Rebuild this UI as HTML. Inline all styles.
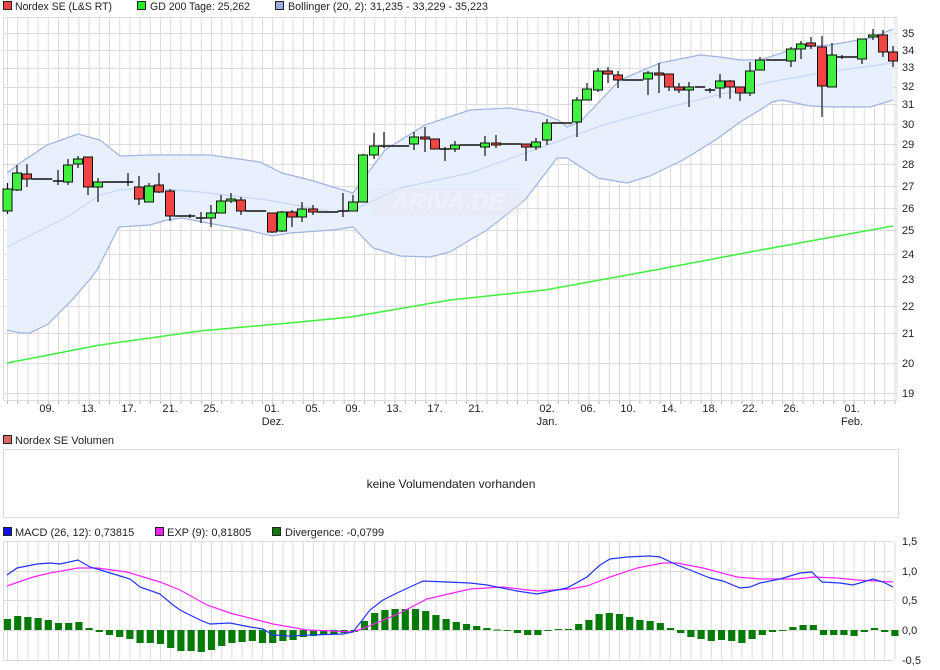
<!DOCTYPE html>
<html><head><meta charset="utf-8">
<style>
body{margin:0;background:#fff;}
svg{display:block;font-family:"Liberation Sans",Arial,sans-serif;}
</style></head>
<body>
<svg id="s" width="940" height="670" viewBox="0 0 940 670" xmlns="http://www.w3.org/2000/svg">
<rect width="940" height="670" fill="#fff"/>
<g id="grid"></g>
<g id="boll"></g>
<g id="wm" opacity="0.35">
<rect x="372" y="188" width="150" height="28" rx="6" fill="#e6e9ef"/>
<text x="448" y="210" font-size="24" font-style="italic" font-weight="bold" fill="#f7f8fa" text-anchor="middle">ARIVA.DE</text>
</g>
<polyline fill="none" stroke="#3ef03e" stroke-width="1.5" points="7,363 100,345 200,331 300,322 351,317 450,300 545,290 600,280 655,270 750,252 893,226"/>
<g id="candles"></g>
<g id="macd"></g>

<!-- legends -->
<rect x="3.5" y="1.5" width="8" height="8" fill="#ee4444" stroke="#222"/>
<text x="15" y="10" font-size="11" fill="#222" textLength="97" lengthAdjust="spacingAndGlyphs">Nordex SE (L&amp;S RT)</text>
<rect x="137.5" y="1.5" width="8" height="8" fill="#22ee22" stroke="#222"/>
<text x="150" y="10" font-size="11" fill="#222" textLength="100" lengthAdjust="spacingAndGlyphs">GD 200 Tage: 25,262</text>
<rect x="275.5" y="1.5" width="8" height="8" fill="#99aadd" stroke="#222"/>
<text x="288" y="10" font-size="11" fill="#222" textLength="200" lengthAdjust="spacingAndGlyphs">Bollinger (20, 2): 31,235 - 33,229 - 35,223</text>

<g font-size="11" fill="#222">
<text x="902" y="37">35</text><text x="902" y="54">34</text><text x="902" y="71">33</text>
<text x="902" y="90">32</text><text x="902" y="108">31</text><text x="902" y="128">30</text>
<text x="902" y="148">29</text><text x="902" y="168">28</text><text x="902" y="190">27</text>
<text x="902" y="212">26</text><text x="902" y="234">25</text><text x="902" y="258">24</text>
<text x="902" y="283">23</text><text x="902" y="310">22</text><text x="902" y="337">21</text>
<text x="902" y="367">20</text><text x="902" y="397">19</text>
</g>
<g font-size="11" fill="#222" text-anchor="middle">
<text x="47" y="412">09.</text><text x="89" y="412">13.</text><text x="129" y="412">17.</text>
<text x="170" y="412">21.</text><text x="211" y="412">25.</text><text x="272" y="412">01.</text>
<text x="313" y="412">05.</text><text x="353" y="412">09.</text><text x="394" y="412">13.</text>
<text x="435" y="412">17.</text><text x="476" y="412">21.</text><text x="547" y="412">02.</text>
<text x="588" y="412">06.</text><text x="628" y="412">10.</text><text x="669" y="412">14.</text>
<text x="710" y="412">18.</text><text x="750" y="412">22.</text><text x="791" y="412">26.</text>
<text x="852" y="412">01.</text>
<text x="273" y="425">Dez.</text><text x="547" y="425">Jan.</text><text x="852" y="425">Feb.</text>
</g>

<rect x="3.5" y="435.5" width="8" height="8" fill="#dd6666" stroke="#222"/>
<text x="15" y="444" font-size="11" fill="#222">Nordex SE Volumen</text>
<rect x="3.5" y="449.5" width="895" height="68" fill="#fff" stroke="#dcdcdc"/>
<text x="451" y="488" font-size="12" fill="#222" text-anchor="middle">keine Volumendaten vorhanden</text>

<rect x="3.5" y="527.5" width="8" height="8" fill="#1111ee" stroke="#222"/>
<text x="15" y="536" font-size="11" fill="#222">MACD (26, 12): 0,73815</text>
<rect x="155.5" y="527.5" width="8" height="8" fill="#ee22ee" stroke="#222"/>
<text x="167" y="536" font-size="11" fill="#222">EXP (9): 0,81805</text>
<rect x="272.5" y="527.5" width="8" height="8" fill="#117711" stroke="#222"/>
<text x="285" y="536" font-size="11" fill="#222">Divergence: -0,0799</text>
<g font-size="11" fill="#222">
<text x="902" y="545">1,5</text><text x="902" y="575">1,0</text><text x="902" y="604">0,5</text>
<text x="902" y="634">0,0</text><text x="902" y="664">-0,5</text>
</g>
</svg>
<script>
var NS="http://www.w3.org/2000/svg";
function el(p,t,a){var e=document.createElementNS(NS,t);for(var k in a)e.setAttribute(k,a[k]);document.getElementById(p).appendChild(e);return e;}
var S=10.2;
for(var i=0;i<88;i++){var x=7.5+i*S;
 el("grid","line",{x1:x,y1:17,x2:x,y2:400,stroke:"#dcdcdc","stroke-width":1});
 el("grid","line",{x1:x,y1:400,x2:x,y2:404,stroke:"#bbb","stroke-width":1});
 el("grid","line",{x1:x,y1:541,x2:x,y2:660,stroke:"#dcdcdc","stroke-width":1});}
var ys=[17,33,50,68,87,104,124,144,164,186,208,230,254,279,306,333,363,393,400];
ys.forEach(function(y){el("grid","line",{x1:3,y1:y+.5,x2:897,y2:y+.5,stroke:"#dcdcdc","stroke-width":1});});
el("grid","line",{x1:3.5,y1:17,x2:3.5,y2:400,stroke:"#dcdcdc"});
el("grid","line",{x1:897,y1:17,x2:897,y2:400,stroke:"#dcdcdc"});
[541,571,600,630,660].forEach(function(y){el("grid","line",{x1:3,y1:y+.5,x2:893,y2:y+.5,stroke:"#dcdcdc"});});
el("grid","line",{x1:3.5,y1:541,x2:3.5,y2:660,stroke:"#dcdcdc"});
var up=[[7,173],[20,163],[47,145],[78,134],[100,140],[120,156],[150,155],[210,155],[260,162],[282,173],[310,180],[353,193],[370,170],[385,150],[425,125],[470,110],[510,108],[540,113],[558,120],[567,127],[580,122],[620,80],[660,63],[700,55],[720,57],[740,60],[760,60],[800,47],[830,45],[870,38],[883,33],[893,29]];
var lo=[[7,330],[20,333],[30,333],[48,324],[73,299],[91,278],[97,270],[119,227],[150,225],[167,220],[182,218],[213,224],[247,230],[272,236],[290,233],[333,230],[353,227],[373,248],[400,256],[430,257],[450,252],[470,240],[487,230],[525,200],[557,158],[567,158],[598,178],[627,183],[650,176],[683,160],[717,139],[740,122],[760,110],[772,102],[782,100],[810,106],[833,107],[870,107],[893,100]];
var mid=[[7,247],[67,217],[100,195],[119,190],[150,188],[200,192],[267,200],[333,212],[353,210],[400,188],[470,173],[553,143],[603,125],[670,107],[770,82],[820,73],[893,63]];
function pts(a){return a.map(function(p){return p[0]+","+p[1];}).join(" ");}
el("boll","polygon",{points:pts(up)+" "+pts(lo.slice().reverse()),fill:"#e8effd"});
el("boll","polyline",{points:pts(up),fill:"none",stroke:"#9fb2e2","stroke-width":1.2});
el("boll","polyline",{points:pts(lo),fill:"none",stroke:"#9fb2e2","stroke-width":1.2});
el("boll","polyline",{points:pts(mid),fill:"none",stroke:"#c5d6f6","stroke-width":1.2});
var C=[["g",7.5,189,211,183,214],["g",17,173,190,165,191],["r",27,174,179,164,187],["f",37,179],["f",47,179],["f",58,181,170,185],
["g",68,165,182,159,185],["g",78,159,164,156,168],["r",88,157,187,157,195],["g",98,182,187,178,202],["f",108,182],["f",118,182],["f",128,182,173,186],
["r",139,187,199,176,205],["g",149,186,202,183,202],["r",159,185,192,173,193],["r",170,191,216,189,221],["f",180,216],["f",190,216,214,218],["f",201,218,212,223],
["g",211,213,218,205,227],["g",221,201,213,195,213],["g",231,199,201,193,203],["r",241,200,211,197,215],["f",251,211],["f",261,211],
["r",272,213,232,213,233],["g",282,212,231,211,232],["r",292,212,217,210,227],["g",302,209,217,202,222],["r",313,209,212,205,215],["f",323,212],["f",333,212],["f",343,211,193,217],
["g",353,202,211,195,211],["g",363,155,202,154,202],["g",374,146,155,133,159],["f",384,146,132,148],["f",394,146],["f",404,146],
["g",414,137,144,132,150],["r",425,137,139,127,152],["r",435,139,149,139,149],["f",445,149,147,161],["g",455,145,149,141,152],["f",465,145],["f",475,145],
["g",485,143,147,136,156],["r",496,143,145,135,148],["f",506,144],["f",516,144],["r",526,144,147,144,161],["g",536,142,147,138,150],["g",547,123,140,119,145],["f",557,123],["f",567,123],
["g",577,100,122,97,137],["g",587,89,100,83,100],["g",598,71,90,68,92],["r",608,71,74,67,83],["r",618,75,80,71,88],["f",628,80],["f",638,80],
["g",648,73,79,71,95],["r",659,73,75,63,93],["r",669,74,87,74,91],["r",679,87,90,83,93],["g",689,87,90,82,107],["f",700,87],["f",710,90,88,93],
["g",720,81,88,74,98],["r",730,81,87,80,99],["r",740,87,93,87,101],["g",750,71,93,62,96],["g",760,60,70,57,70],["f",771,60],["f",781,60],
["g",791,49,61,47,67],["g",801,44,49,41,59],["r",811,43,46,37,49],["r",822,47,86,36,117],["g",832,55,87,43,87],["f",842,57,55,59],["f",852,57],
["g",862,39,59,39,64],["g",873,35,37,29,40],["r",883,35,52,30,57],["r",893,52,61,46,67]];
C.forEach(function(c){var t=c[0],x=c[1];
 if(t=="f"){ if(c.length>3) el("candles","line",{x1:x,y1:c[3],x2:x,y2:c[4],stroke:"#111","stroke-width":1.2});
   el("candles","line",{x1:x-5.2,y1:c[2],x2:x+5.2,y2:c[2],stroke:"#111","stroke-width":1.5}); return;}
 el("candles","line",{x1:x,y1:c[4],x2:x,y2:c[5],stroke:"#111","stroke-width":1.2});
 var h=Math.max(c[3]-c[2],1.5);
 el("candles","rect",{x:x-4.5,y:c[2],width:9,height:h,fill:t=="g"?"#3ff03f":"#f04444",stroke:"#111","stroke-width":1});
});
var d=[11,14,13,12,10,7,7,8,2,-2,-5,-7,-9,-13,-13,-14,-18,-21,-21,-22,-20,-16,-13,-12,-11,-13,-13,-11,-10,-7,-6,-5,-4,-3,-2,9,17,20,21,21,21,19,15,11,8,6,
4,2,0.5,-1,-3,-5,-5,-1,1,1,6,10,16,17,16,13,10,9,7,2,-3,-7,-9,-11,-10,-11,-13,-9,-5,-2,-1,3,5,5,-5,-5,-5,-6,-2,2,-2,-6];
d.forEach(function(v,i){var x=7.5+i*S;var h=Math.abs(v);if(h<1)h=1;
 el("macd","rect",{x:x-3.6,y:v>0?630-v:630,width:7.2,height:h,fill:"#067a06"});});
var mb=[[7,575],[17,568],[27,566],[37,564],[50,563],[60,564],[78,560],[90,567],[107,572],[120,576],[130,579],[140,587],[160,594],[173,605],[180,610],[200,620],[210,624],[230,623],[250,627],[263,629],[273,635],[290,636],[310,635],[343,634],[353,632],[370,610],[383,600],[397,593],[410,587],[423,581],[470,583],[487,585],[517,591],[537,594],[567,588],[587,577],[600,565],[610,559],[627,557],[650,556],[660,557],[677,565],[690,570],[710,578],[723,581],[740,588],[750,587],[760,583],[780,579],[800,573],[812,572],[822,582],[840,583],[853,585],[873,579],[883,582],[893,587]];
var me=[[7,586],[33,577],[50,573],[78,568],[97,568],[127,572],[160,582],[180,590],[207,605],[230,613],[273,624],[307,630],[333,631],[353,632],[367,627],[400,613],[427,599],[470,589],[503,587],[537,591],[570,589],[587,586],[610,577],[637,568],[663,563],[677,563],[703,568],[737,577],[760,579],[797,579],[813,577],[837,578],[857,580],[893,582]];
el("macd","polyline",{points:pts(me),fill:"none",stroke:"#ff22ff","stroke-width":1.2});
el("macd","polyline",{points:pts(mb),fill:"none",stroke:"#2233ff","stroke-width":1.2});
</script>
</body></html>
